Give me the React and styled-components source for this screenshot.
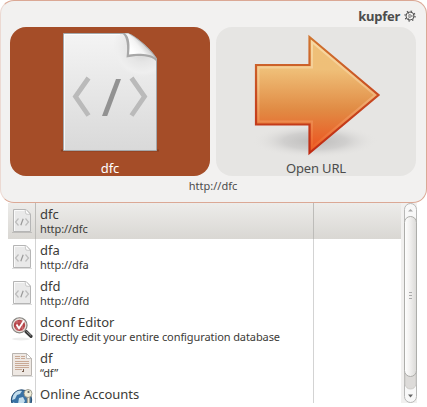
import React from "react";
import styled, { createGlobalStyle } from "styled-components";

const GlobalStyle = createGlobalStyle`
  * { box-sizing: border-box; }
  html, body { margin: 0; background: #fff; overflow: hidden; }
  body { font-family: "Noto Sans", "Open Sans", sans-serif; color: #3c3b37; }
  svg { display: block; }
`;

const Window = styled.div`
  width: 427px;
  height: 403px;
  display: flex;
  flex-direction: column;
  overflow: hidden;
`;

const Panel = styled.section`
  height: 203px;
  flex: none;
  padding: 7px 10px 0 9px;
  background: #f2f1f0;
  border: 1px solid #dba895;
  border-left-color: #ecd9d2;
  border-radius: 14px;
`;

const TitleBar = styled.header`
  height: 19px;
  display: flex;
  justify-content: flex-end;
  gap: 4px;
  font-weight: 700;
  font-size: 13px;
  line-height: 16px;
  letter-spacing: -0.25px;
  color: #4c4c4c;
`;

const Tiles = styled.div`
  display: flex;
  gap: 6px;
`;

const Tile = styled.div`
  width: 200px;
  height: 149px;
  border-radius: 16px;
  overflow: hidden;
  background: ${(p) => (p.$active ? "#a54d28" : "#e6e5e3")};
  color: ${(p) => (p.$active ? "#fff" : "#4c4c4c")};
`;

const TileLabel = styled.div`
  margin-top: 2px;
  text-align: center;
  font-size: 13px;
  line-height: 17px;
  letter-spacing: ${(p) => p.$track || "0"};
`;

const Caption = styled.div`
  text-align: center;
  font-size: 11px;
  line-height: 20px;
  color: #4c4c4c;
`;

const Results = styled.div`
  flex: 1;
  min-height: 0;
  display: flex;
  padding-left: 8px;
`;

const List = styled.div`
  width: 393px;
  overflow: hidden;
`;

const Row = styled.div`
  height: 36px;
  display: grid;
  grid-template-columns: 28px 278px 1fr;
  background: ${(p) => (p.$selected ? "linear-gradient(#edecea, #d9d7d3)" : "#fff")};
`;

const Cell = styled.div`
  border-right: 1px solid ${(p) => (p.$selected ? "#bdbcb9" : "#d3d3d3")};
  overflow: hidden;
`;

const TextCell = styled(Cell)`
  padding: 3px 0 0 4px;
  white-space: nowrap;
`;

const Name = styled.div`
  font-size: 13px;
  line-height: 17px;
`;

const Detail = styled.div`
  font-size: 11px;
  line-height: 11px;
  letter-spacing: -0.09px;
`;

const ScrollBar = styled.div`
  width: 16px;
  padding-left: 3px;
  background: #f1f0ef;
`;

const Gear = () => (
  <svg width="12" height="16" viewBox="0 0 12 16" fill="none" stroke="#555">
    <circle cx="6" cy="8" r="4" strokeWidth="1" />
    <circle cx="6" cy="8" r="5" strokeWidth="1.300" strokeDasharray="1.500 2.427" />
    <circle cx="6" cy="8" r="1.300" strokeWidth=".7" />
    <path d="M7.300 8H9.900M5.300 6.900 4 4.700M5.300 9.100 4 11.300" strokeWidth=".6" />
  </svg>
);

const PageArt = () => (
  <svg width="200" height="131" viewBox="10 27 200 131">
    <defs>
      <linearGradient id="sheet" x1="0" y1="0" x2="0" y2="1">
        <stop stopColor="#f4f4f4" /><stop offset="1" stopColor="#d9d9d9" />
      </linearGradient>
      <linearGradient id="curl" x1="133" y1="52" x2="145" y2="42" gradientUnits="userSpaceOnUse">
        <stop stopColor="#fff" /><stop offset=".5" stopColor="#f4f4f4" /><stop offset="1" stopColor="#c4c4c4" />
      </linearGradient>
      <radialGradient id="glow" cx="142" cy="48" r="29" gradientUnits="userSpaceOnUse">
        <stop stopColor="#cfcfcf" /><stop offset=".5" stopColor="#e6e6e6" /><stop offset=".85" stopColor="#efefef" /><stop offset="1" stopColor="#eee" stopOpacity="0" />
      </radialGradient>
    </defs>
    <path d="M61 150.500h98" stroke="#7b3518" strokeWidth="2" opacity=".6" />
    <path d="M63.500 33.500H128C134 35 151 49 156.500 58.500V150.500h-93Z" fill="url(#sheet)" stroke="#a4a8ab" />
    <path d="M112 34H128C134 35.500 150.500 49 156 59V78H112Z" fill="url(#glow)" />
    <path d="M64.500 150V34.500H120" fill="none" stroke="#fff" opacity=".75" />
    <path d="M122 33.500C127 36 128 47 126.500 57.500C136 55 152 55 156.500 61.500V58.500C151 49 134 35 128 33.500Z" fill="#a8a8a8" />
    <path d="M125 33.500C130 37 130 46 129 54.500C139 53 151 54 155.500 58C150 49 134 36 128 33.500Z" fill="url(#curl)" />
    <path d="m88.500 78-13 18.500 13 19M131.500 78l13 18.500-13 19" fill="none" stroke="#bababa" strokeWidth="4.800" />
    <path d="M116 79h5l-13.800 37H102Z" fill="#929292" />
  </svg>
);

const ArrowArt = () => (
  <svg width="200" height="131" viewBox="216 27 200 131">
    <defs>
      <linearGradient id="fill" x1="0" y1="0" x2="0" y2="1">
        <stop stopColor="#efc078" /><stop offset=".28" stopColor="#efbf78" /><stop offset=".62" stopColor="#e18c45" /><stop offset="1" stopColor="#ed4e1c" />
      </linearGradient>
      <linearGradient id="edge" x1="0" y1="0" x2="0" y2="1">
        <stop stopColor="#d07530" /><stop offset=".5" stopColor="#c84b22" /><stop offset="1" stopColor="#bf2b13" />
      </linearGradient>
      <linearGradient id="shine" x1="0" y1="0" x2="0" y2="1">
        <stop stopColor="#f9dfae" /><stop offset=".4" stopColor="#f4c993" /><stop offset="1" stopColor="#ed6529" />
      </linearGradient>
      <radialGradient id="shade">
        <stop stopColor="#bebdbc" /><stop offset=".5" stopColor="#d0cfce" /><stop offset="1" stopColor="#e6e5e3" stopOpacity="0" />
      </radialGradient>
    </defs>
    <ellipse cx="315" cy="141" rx="63" ry="17" fill="url(#shade)" />
    <path d="M256 65H309.500V37L378.500 95 309.500 153V124.500H256Z" fill="url(#fill)" stroke="url(#edge)" strokeWidth="2.200" />
    <path d="M258.500 67.500H312V42L375 95 312 147.500V121.500H258.500Z" fill="none" stroke="url(#shine)" strokeWidth="2" opacity=".8" />
  </svg>
);

const SmallCode = () => (
  <svg width="27" height="36" viewBox="0 0 27 36">
    <path d="M5.500 6.500H18l4.500 4.500V28.500H5.500Z" fill="#e9e9e9" stroke="#b5b5b5" />
    <path d="M6.500 28V7.500H17" fill="none" stroke="#fafafa" />
    <path d="M17 6.500 18 11l4.500.500L18 6.500Z" fill="#fff" stroke="#b8b8b8" strokeWidth=".7" />
    <path d="m10.500 15.500-3 3.500 3 3.500m7-7 3 3.500-3 3.500" fill="none" stroke="#bcbcbc" strokeWidth="1.200" />
    <path d="m15.200 15.700-2.400 6.600" stroke="#999" strokeWidth="1.200" />
    <path d="M4 29.500h20" stroke="#000" opacity=".13" />
  </svg>
);

const Magnifier = () => (
  <svg width="27" height="36" viewBox="0 0 27 36">
    <ellipse cx="13" cy="28" rx="9" ry="1.500" fill="#000" opacity=".07" />
    <path d="m18 20.500 5 4.800" stroke="#3a3a3a" strokeWidth="3.200" strokeLinecap="round" />
    <path d="m18.500 20.500 4.500 4" stroke="#999" strokeWidth="1" />
    <circle cx="11.500" cy="14.300" r="7.500" fill="#b44448" stroke="#858783" strokeWidth="1.300" />
    <circle cx="11.500" cy="14.300" r="6.300" fill="none" stroke="#e6e5df" strokeWidth="1.300" />
    <path d="M7 11h10M7 17h10M9 9v11M14.500 9v11" stroke="#d98588" strokeWidth=".5" />
    <path d="m8.500 13.500 2.500 3.800L16 9.500" fill="none" stroke="#fff" strokeWidth="1.800" />
  </svg>
);

const TextDocument = () => (
  <svg width="27" height="36" viewBox="0 0 27 36">
    <path d="M4.500 6.500H18.500l5 5V28.500H4.500Z" fill="#eee8e3" stroke="#b9b4af" />
    <path d="M18.500 6.500V11.500h5Z" fill="#fff" stroke="#b8b3af" strokeWidth=".8" />
    <path d="M7 9.500h5M7 11.500h5M13 9.500h4M13 11.500h4M7 14.500h14M7 16.500h14M7 18.500h14M7 20.500h14M7 22.500h7" stroke="#c9a995" />
    <path d="M15.500 22v3M15.500 24.500H14" stroke="#786050" />
    <path d="M3 29.500h22" stroke="#000" opacity=".12" />
  </svg>
);

const GlobeKey = () => (
  <svg width="27" height="36" viewBox="0 0 27 36">
    <circle cx="13.500" cy="17" r="10.200" fill="#3a73a5" stroke="#244b70" />
    <path d="M5 13C7 8 11 7 14 8l-2 3-3 1-2 4-3 1ZM11 15l4-1 2 4-3 5-4-2Z" fill="#c3ddec" />
    <path d="M5 19l4 2v4l-4-3Z" fill="#9dc3db" />
    <path d="M20.500 12v12" stroke="#77776f" strokeWidth="3.400" />
    <path d="M20.500 12v12" stroke="#e9e6d2" strokeWidth="1.800" />
    <circle cx="20" cy="10.500" r="4" fill="#eeecd8" stroke="#88877b" strokeWidth=".8" />
    <circle cx="20.500" cy="9" r="1.100" fill="#595e5c" />
  </svg>
);

const ScrollArt = () => (
  <svg width="13" height="200" viewBox="0 0 13 200">
    <defs>
      <linearGradient id="thumb">
        <stop stopColor="#fff" /><stop offset=".4" stopColor="#f3f2f1" /><stop offset="1" stopColor="#dad9d7" />
      </linearGradient>
    </defs>
    <rect x=".5" y=".5" width="12" height="199" rx="6" fill="#f8f8f8" stroke="#b8b8b7" />
    <path d="M1 168h11v13q-1 5-5.500 5T1 181Z" fill="#dddbd9" stroke="#c6c5c2" strokeWidth=".8" />
    <rect x=".5" y="13.500" width="12" height="160" rx="6" fill="url(#thumb)" stroke="#adadaa" />
    <path d="M4 8.500h5L6.500 6Z" fill="#aaa" />
    <path d="M4 191.500h5L6.500 194.500Z" fill="#666" />
    <path d="M5 89.500h3M5 92.500h3M5 95.500h3" stroke="#aaa" />
  </svg>
);

const items = [
  { name: "dfc", detail: "http://dfc", Icon: SmallCode, selected: true },
  { name: "dfa", detail: "http://dfa", Icon: SmallCode },
  { name: "dfd", detail: "http://dfd", Icon: SmallCode },
  { name: "dconf Editor", detail: "Directly edit your entire configuration database", Icon: Magnifier },
  { name: "df", detail: "“df”", Icon: TextDocument },
  { name: "Online Accounts", detail: "", Icon: GlobeKey },
];

export default function App() {
  return (
    <>
      <GlobalStyle />
      <Window>
        <Panel>
          <TitleBar><span>kupfer</span><Gear /></TitleBar>
          <Tiles>
            <Tile $active><PageArt /><TileLabel>dfc</TileLabel></Tile>
            <Tile><ArrowArt /><TileLabel $track="-0.15px">Open URL</TileLabel></Tile>
          </Tiles>
          <Caption>http://dfc</Caption>
        </Panel>
        <Results>
          <List>
            {items.map(({ name, detail, Icon, selected }) => (
              <Row key={name} $selected={selected}>
                <Cell $selected={selected}><Icon /></Cell>
                <TextCell $selected={selected}>
                  <Name>{name}</Name>
                  <Detail>{detail}</Detail>
                </TextCell>
              </Row>
            ))}
          </List>
          <ScrollBar><ScrollArt /></ScrollBar>
        </Results>
      </Window>
    </>
  );
}
